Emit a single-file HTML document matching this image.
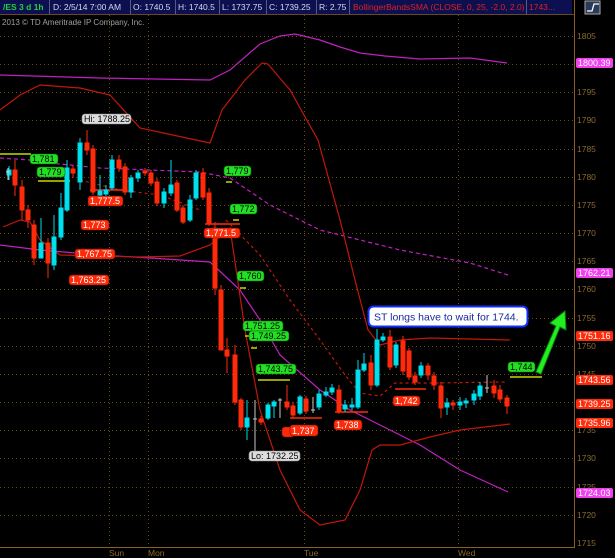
<!DOCTYPE html>
<html><head><meta charset="utf-8"><style>
html,body{margin:0;padding:0;background:#000;}
svg{display:block;font-family:"Liberation Sans",sans-serif;}
</style></head><body>
<svg width="615" height="558" viewBox="0 0 615 558" xmlns="http://www.w3.org/2000/svg">
<rect width="615" height="558" fill="#000"/>
<rect x="0" y="0" width="572" height="14" fill="#0c1050"/>
<line x1="0" y1="14.5" x2="575" y2="14.5" stroke="#6b4a1a"/>
<g stroke="#5a5a80" stroke-width="1">
<line x1="49.5" y1="0" x2="49.5" y2="14"/><line x1="130.5" y1="0" x2="130.5" y2="14"/><line x1="175.5" y1="0" x2="175.5" y2="14"/><line x1="219.5" y1="0" x2="219.5" y2="14"/><line x1="266.5" y1="0" x2="266.5" y2="14"/><line x1="316.5" y1="0" x2="316.5" y2="14"/><line x1="349.5" y1="0" x2="349.5" y2="14"/><line x1="526.5" y1="0" x2="526.5" y2="14"/>
</g>
<g font-size="8.5" fill="#d8d8e8">
<text x="3" y="10" fill="#20d040" font-weight="bold">/ES 3 d 1h</text>
<text x="53" y="10">D: 2/5/14 7:00 AM</text>
<text x="133" y="10">O: 1740.5</text>
<text x="178" y="10">H: 1740.5</text>
<text x="222" y="10">L: 1737.75</text>
<text x="269" y="10">C: 1739.25</text>
<text x="319" y="10">R: 2.75</text>
<text x="353" y="10" fill="#e02020">BollingerBandsSMA (CLOSE, 0, 25, -2.0, 2.0)</text>
<text x="529" y="10" fill="#e02020">1743...</text>
</g>
<rect x="585" y="1" width="15" height="13" fill="#2a3a5a" stroke="#aaa"/>
<path d="M587 11 L592 11 L594 4 L599 4" stroke="#fff" fill="none" stroke-width="1.3"/>
<text x="2" y="25" font-size="8" fill="#a0a0a0">2013 © TD Ameritrade IP Company, Inc.</text>
<g stroke="#6a4a10" stroke-dasharray="1,3" stroke-width="1">
<line x1="0" y1="36.5" x2="574" y2="36.5"/><line x1="0" y1="64.5" x2="574" y2="64.5"/><line x1="0" y1="92.5" x2="574" y2="92.5"/><line x1="0" y1="120.5" x2="574" y2="120.5"/><line x1="0" y1="149.5" x2="574" y2="149.5"/><line x1="0" y1="177.5" x2="574" y2="177.5"/><line x1="0" y1="205.5" x2="574" y2="205.5"/><line x1="0" y1="233.5" x2="574" y2="233.5"/><line x1="0" y1="261.5" x2="574" y2="261.5"/><line x1="0" y1="289.5" x2="574" y2="289.5"/><line x1="0" y1="318.5" x2="574" y2="318.5"/><line x1="0" y1="346.5" x2="574" y2="346.5"/><line x1="0" y1="374.5" x2="574" y2="374.5"/><line x1="0" y1="402.5" x2="574" y2="402.5"/><line x1="0" y1="430.5" x2="574" y2="430.5"/><line x1="0" y1="458.5" x2="574" y2="458.5"/><line x1="0" y1="487.5" x2="574" y2="487.5"/><line x1="0" y1="515.5" x2="574" y2="515.5"/>
<line x1="109.5" y1="15" x2="109.5" y2="547"/><line x1="148.5" y1="15" x2="148.5" y2="547"/><line x1="304.5" y1="15" x2="304.5" y2="547"/><line x1="458.5" y1="15" x2="458.5" y2="547"/>
</g>
<line x1="574.5" y1="0" x2="574.5" y2="548" stroke="#8a6020"/>
<line x1="0" y1="547.5" x2="575" y2="547.5" stroke="#8a6020"/>
<g font-size="8.5" fill="#8a6a30">
<text x="577" y="39">1805</text><text x="577" y="95">1795</text><text x="577" y="123">1790</text><text x="577" y="152">1785</text><text x="577" y="180">1780</text><text x="577" y="208">1775</text><text x="577" y="236">1770</text><text x="577" y="264">1765</text><text x="577" y="292">1760</text><text x="577" y="321">1755</text><text x="577" y="349">1750</text><text x="577" y="377">1745</text><text x="577" y="405">1740</text><text x="577" y="433">1735</text><text x="577" y="461">1730</text><text x="577" y="490">1725</text><text x="577" y="518">1720</text><text x="577" y="546">1715</text>
<text x="109" y="556">Sun</text><text x="148" y="556">Mon</text><text x="304" y="556">Tue</text><text x="458" y="556">Wed</text>
</g>
<g fill="none" stroke-width="1.2">
<polyline stroke="#c020c0" points="0,75 100,78 210,80 230,70 260,44 280,36 295,34 320,40 340,47 360,53 385,56 420,59 470,58 507,63"/>
<polyline stroke="#c020c0" points="0,245 40,250 100,255 150,258 210,262 240,290 260,320 280,355 320,390 350,410 380,425 420,445 460,470 508,492"/>
<polyline stroke="#c020c0" stroke-dasharray="4,3" points="0,158 30,160 50,163 100,168 200,172 230,178 270,205 320,230 400,250 470,263 508,275"/>
<polyline stroke="#c01808" points="0,110 20,95 40,85 80,88 110,95 140,128 210,143 222,110 245,80 262,63 268,64 290,90 318,140 340,220 355,280 368,330 380,345 400,340 430,338 510,340"/>
<polyline stroke="#c01808" points="3,227 20,220 30,222 40,240 60,255 100,256 140,257 180,256 210,245 230,228 245,330 260,410 280,470 300,510 320,525 345,520 360,490 372,450 380,445 400,445 430,437 460,430 510,424"/>
<polyline stroke="#c01808" stroke-dasharray="3,3" points="80,180 120,190 160,195 200,210"/>
<polyline stroke="#c01808" stroke-dasharray="3,3" points="226,220 260,255 290,300 320,340 345,375 360,393 380,396 395,383 430,383 505,382"/>
</g>
<g stroke="#c8d800" stroke-width="1.5">
<line x1="0" y1="154" x2="31" y2="154"/><line x1="38" y1="181" x2="70" y2="181"/><line x1="226" y1="182" x2="232" y2="182"/><line x1="233" y1="220" x2="239" y2="220"/><line x1="240" y1="288" x2="246" y2="288"/><line x1="245" y1="336" x2="250" y2="336"/><line x1="251" y1="348" x2="257" y2="348"/><line x1="258" y1="380" x2="290" y2="380"/><line x1="510" y1="377" x2="542" y2="377"/>
</g>
<g stroke="#ff2a0a" stroke-width="1.5">
<line x1="90" y1="190" x2="125" y2="190"/><line x1="205" y1="224" x2="240" y2="224"/><line x1="290" y1="418" x2="322" y2="418"/><line x1="335" y1="412" x2="368" y2="412"/><line x1="395" y1="389" x2="426" y2="389"/>
</g>
<g stroke-width="1">
<g stroke="#ff2a0a" fill="#ff2a0a">
<line x1="15" y1="160" x2="15" y2="196"/><rect x="13" y="170" width="4" height="15"/>
<line x1="22" y1="180" x2="22" y2="220"/><rect x="20" y="187" width="4" height="23"/>
<line x1="28" y1="205" x2="28" y2="228"/><rect x="26" y="210" width="4" height="10"/>
<line x1="34" y1="220" x2="34" y2="265"/><rect x="32" y="225" width="4" height="33"/>
<line x1="48" y1="238" x2="48" y2="278"/><rect x="46" y="243" width="4" height="20"/>
<line x1="73" y1="165" x2="73" y2="178"/><rect x="71" y="169" width="4" height="4"/>
<line x1="87" y1="130" x2="87" y2="155"/><rect x="85" y="143" width="4" height="7"/>
<line x1="93" y1="145" x2="93" y2="195"/><rect x="91" y="149" width="4" height="43"/>
<line x1="119" y1="155" x2="119" y2="172"/><rect x="117" y="160" width="4" height="8"/>
<line x1="125" y1="163" x2="125" y2="195"/><rect x="123" y="167" width="4" height="25"/>
<line x1="145" y1="168" x2="145" y2="176"/><rect x="143" y="171" width="4" height="2"/>
<line x1="151" y1="170" x2="151" y2="186"/><rect x="149" y="173" width="4" height="10"/>
<line x1="157" y1="178" x2="157" y2="206"/><rect x="155" y="182" width="4" height="21"/>
<line x1="177" y1="180" x2="177" y2="212"/><rect x="175" y="183" width="4" height="27"/>
<line x1="183" y1="205" x2="183" y2="224"/><rect x="181" y="208" width="4" height="14"/>
<line x1="203" y1="168" x2="203" y2="200"/><rect x="201" y="173" width="4" height="24"/>
<line x1="209" y1="188" x2="209" y2="226"/><rect x="207" y="193" width="4" height="30"/>
<line x1="215" y1="222" x2="215" y2="295"/><rect x="213" y="228" width="4" height="60"/>
<line x1="221" y1="285" x2="221" y2="305"/><rect x="219" y="290" width="4" height="60"/>
<line x1="227" y1="338" x2="227" y2="373"/><rect x="225" y="350" width="4" height="6"/>
<line x1="235" y1="345" x2="235" y2="405"/><rect x="233" y="355" width="4" height="47"/>
<line x1="241" y1="398" x2="241" y2="430"/><rect x="239" y="400" width="4" height="27"/>
<line x1="261" y1="416" x2="261" y2="425"/><rect x="259" y="419" width="4" height="3"/>
<line x1="287" y1="385" x2="287" y2="410"/><rect x="285" y="402" width="4" height="5"/>
<line x1="293" y1="402" x2="293" y2="418"/><rect x="291" y="406" width="4" height="9"/>
<line x1="306" y1="396" x2="306" y2="414"/><rect x="304" y="399" width="4" height="12"/>
<line x1="339" y1="385" x2="339" y2="414"/><rect x="337" y="390" width="4" height="22"/>
<line x1="371" y1="355" x2="371" y2="390"/><rect x="369" y="363" width="4" height="22"/>
<line x1="390" y1="330" x2="390" y2="370"/><rect x="388" y="337" width="4" height="30"/>
<line x1="403" y1="336" x2="403" y2="375"/><rect x="401" y="341" width="4" height="30"/>
<line x1="409" y1="348" x2="409" y2="380"/><rect x="407" y="351" width="4" height="26"/>
<line x1="415" y1="372" x2="415" y2="385"/><rect x="413" y="376" width="4" height="6"/>
<line x1="428" y1="363" x2="428" y2="380"/><rect x="426" y="366" width="4" height="9"/>
<line x1="434" y1="372" x2="434" y2="390"/><rect x="432" y="376" width="4" height="9"/>
<line x1="441" y1="382" x2="441" y2="418"/><rect x="439" y="386" width="4" height="22"/>
<line x1="453" y1="400" x2="453" y2="410"/><rect x="451" y="403" width="4" height="2"/>
<line x1="494" y1="380" x2="494" y2="398"/><rect x="492" y="386" width="4" height="7"/>
<line x1="500" y1="385" x2="500" y2="402"/><rect x="498" y="390" width="4" height="9"/>
<line x1="507" y1="395" x2="507" y2="414"/><rect x="505" y="398" width="4" height="8"/>
</g>
<g stroke="#00d8e8" fill="#00e0ee">
<line x1="9" y1="166" x2="9" y2="180"/><rect x="7" y="170" width="4" height="5"/>
<line x1="41" y1="218" x2="41" y2="258"/><rect x="39" y="243" width="4" height="15"/>
<line x1="54" y1="215" x2="54" y2="270"/><rect x="52" y="237" width="4" height="28"/>
<line x1="61" y1="193" x2="61" y2="240"/><rect x="59" y="208" width="4" height="29"/>
<line x1="67" y1="160" x2="67" y2="212"/><rect x="65" y="168" width="4" height="42"/>
<line x1="80" y1="138" x2="80" y2="190"/><rect x="78" y="143" width="4" height="39"/>
<line x1="100" y1="175" x2="100" y2="197"/><rect x="98" y="191" width="4" height="4"/>
<line x1="106" y1="185" x2="106" y2="198"/><rect x="104" y="190" width="4" height="4"/>
<line x1="112" y1="155" x2="112" y2="190"/><rect x="110" y="160" width="4" height="28"/>
<line x1="131" y1="175" x2="131" y2="198"/><rect x="129" y="178" width="4" height="14"/>
<line x1="138" y1="170" x2="138" y2="182"/><rect x="136" y="173" width="4" height="5"/>
<line x1="164" y1="188" x2="164" y2="208"/><rect x="162" y="192" width="4" height="11"/>
<line x1="171" y1="160" x2="171" y2="196"/><rect x="169" y="185" width="4" height="8"/>
<line x1="190" y1="195" x2="190" y2="222"/><rect x="188" y="200" width="4" height="20"/>
<line x1="196" y1="170" x2="196" y2="200"/><rect x="194" y="173" width="4" height="25"/>
<line x1="247" y1="400" x2="247" y2="440"/><rect x="245" y="418" width="4" height="9"/>
<line x1="268" y1="403" x2="268" y2="420"/><rect x="266" y="405" width="4" height="13"/>
<line x1="274" y1="400" x2="274" y2="418"/><rect x="272" y="402" width="4" height="4"/>
<line x1="300" y1="395" x2="300" y2="415"/><rect x="298" y="397" width="4" height="16"/>
<line x1="319" y1="390" x2="319" y2="410"/><rect x="317" y="394" width="4" height="13"/>
<line x1="326" y1="387" x2="326" y2="397"/><rect x="324" y="392" width="4" height="3"/>
<line x1="332" y1="384" x2="332" y2="395"/><rect x="330" y="388" width="4" height="4"/>
<line x1="345" y1="400" x2="345" y2="412"/><rect x="343" y="405" width="4" height="4"/>
<line x1="352" y1="398" x2="352" y2="410"/><rect x="350" y="405" width="4" height="2"/>
<line x1="358" y1="360" x2="358" y2="409"/><rect x="356" y="370" width="4" height="37"/>
<line x1="364" y1="353" x2="364" y2="372"/><rect x="362" y="364" width="4" height="6"/>
<line x1="377" y1="329" x2="377" y2="387"/><rect x="375" y="340" width="4" height="45"/>
<line x1="383" y1="333" x2="383" y2="342"/><rect x="381" y="337" width="4" height="3"/>
<line x1="396" y1="342" x2="396" y2="368"/><rect x="394" y="345" width="4" height="20"/>
<line x1="421" y1="362" x2="421" y2="378"/><rect x="419" y="366" width="4" height="9"/>
<line x1="447" y1="398" x2="447" y2="415"/><rect x="445" y="403" width="4" height="4"/>
<line x1="460" y1="397" x2="460" y2="410"/><rect x="458" y="402" width="4" height="3"/>
<line x1="466" y1="398" x2="466" y2="408"/><rect x="464" y="401" width="4" height="2"/>
<line x1="474" y1="390" x2="474" y2="405"/><rect x="472" y="394" width="4" height="6"/>
<line x1="480" y1="382" x2="480" y2="400"/><rect x="478" y="386" width="4" height="10"/>
</g>
<g stroke="#c8c8c8">
<line x1="8" y1="168" x2="8" y2="180"/><line x1="6" y1="172" x2="10" y2="172"/>
<line x1="255" y1="400" x2="255" y2="452"/><line x1="253" y1="419" x2="257" y2="419"/>
<line x1="280" y1="398" x2="280" y2="418"/><line x1="278" y1="400" x2="282" y2="400"/>
<line x1="313" y1="397" x2="313" y2="413"/><line x1="311" y1="410" x2="315" y2="410"/>
<line x1="487" y1="375" x2="487" y2="393"/><line x1="485" y1="388" x2="489" y2="388"/>
</g>
</g>
<g font-size="9">
<g fill="#22e022" stroke="#0a6a0a" stroke-width="0.6">
<rect x="30" y="154" width="28" height="10" rx="3"/><rect x="37" y="167" width="28" height="10" rx="3"/>
<rect x="224" y="166" width="27" height="10" rx="3"/><rect x="230" y="204" width="27" height="10" rx="3"/>
<rect x="237" y="271" width="27" height="10" rx="3"/><rect x="243" y="321" width="40" height="10" rx="3"/>
<rect x="249" y="331" width="40" height="10" rx="3"/><rect x="256" y="364" width="40" height="10" rx="3"/>
<rect x="508" y="362" width="27" height="10" rx="3"/>
</g>
<g fill="#000">
<text x="32" y="162">1,781</text><text x="39" y="175">1,779</text><text x="226" y="174">1,779</text><text x="232" y="212">1,772</text><text x="239" y="279">1,760</text><text x="245" y="329">1,751.25</text><text x="251" y="339">1,749.25</text><text x="258" y="372">1,743.75</text><text x="510" y="370">1,744</text>
</g>
<g fill="#ff2a0a" stroke="#801000" stroke-width="0.6">
<rect x="88" y="196" width="35" height="10" rx="3"/><rect x="81" y="220" width="28" height="10" rx="3"/>
<rect x="75" y="249" width="40" height="10" rx="3"/><rect x="69" y="275" width="40" height="10" rx="3"/>
<rect x="204" y="228" width="36" height="10" rx="3"/><rect x="282" y="427" width="12" height="10" rx="3"/>
<rect x="290" y="425" width="28" height="11" rx="3"/><rect x="334" y="420" width="28" height="10" rx="3"/>
<rect x="393" y="396" width="27" height="10" rx="3"/>
</g>
<g fill="#fff">
<text x="90" y="204">1,777.5</text><text x="83" y="228">1,773</text><text x="77" y="257">1,767.75</text><text x="71" y="283">1,763.25</text><text x="206" y="236">1,771.5</text><text x="292" y="434">1,737</text><text x="336" y="428">1,738</text><text x="395" y="404">1,742</text>
</g>
<g fill="#ddd" stroke="#888" stroke-width="0.6"><rect x="82" y="114" width="49" height="10" rx="3"/><rect x="249" y="451" width="51" height="10" rx="3"/></g>
<g fill="#000"><text x="84" y="122">Hi: 1788.25</text><text x="251" y="459">Lo: 1732.25</text></g>
</g>
<g font-size="9">
<rect x="576" y="58" width="37" height="10" rx="2" fill="#f040f0"/><text x="578" y="66" fill="#fff">1800.39</text>
<rect x="576" y="268" width="37" height="10" rx="2" fill="#f040f0"/><text x="578" y="276" fill="#fff">1762.21</text>
<rect x="576" y="331" width="37" height="10" rx="2" fill="#ff2a0a"/><text x="578" y="339" fill="#fff">1751.16</text>
<rect x="576" y="375" width="37" height="10" rx="2" fill="#ff2a0a"/><text x="578" y="383" fill="#fff">1743.56</text>
<rect x="576" y="399" width="37" height="10" rx="2" fill="#ff2a0a"/><text x="578" y="407" fill="#fff">1739.25</text>
<rect x="576" y="418" width="37" height="10" rx="2" fill="#ff2a0a"/><text x="578" y="426" fill="#fff">1735.96</text>
<rect x="576" y="488" width="37" height="10" rx="2" fill="#f040f0"/><text x="578" y="496" fill="#fff">1724.03</text>
</g>
<rect x="368.5" y="306.5" width="159" height="20" rx="5" fill="#fff" stroke="#1030ff" stroke-width="2"/>
<text x="374" y="320.5" font-size="10.5" fill="#1a2aa0">ST longs have to wait for 1744.</text>
<path d="M536 372 L556 326 L550 323 L565 311 L566 330 L560 327 L541 374 Z" fill="#22ee22" stroke="#0a8a0a" stroke-width="1"/>
</svg>
</body></html>
